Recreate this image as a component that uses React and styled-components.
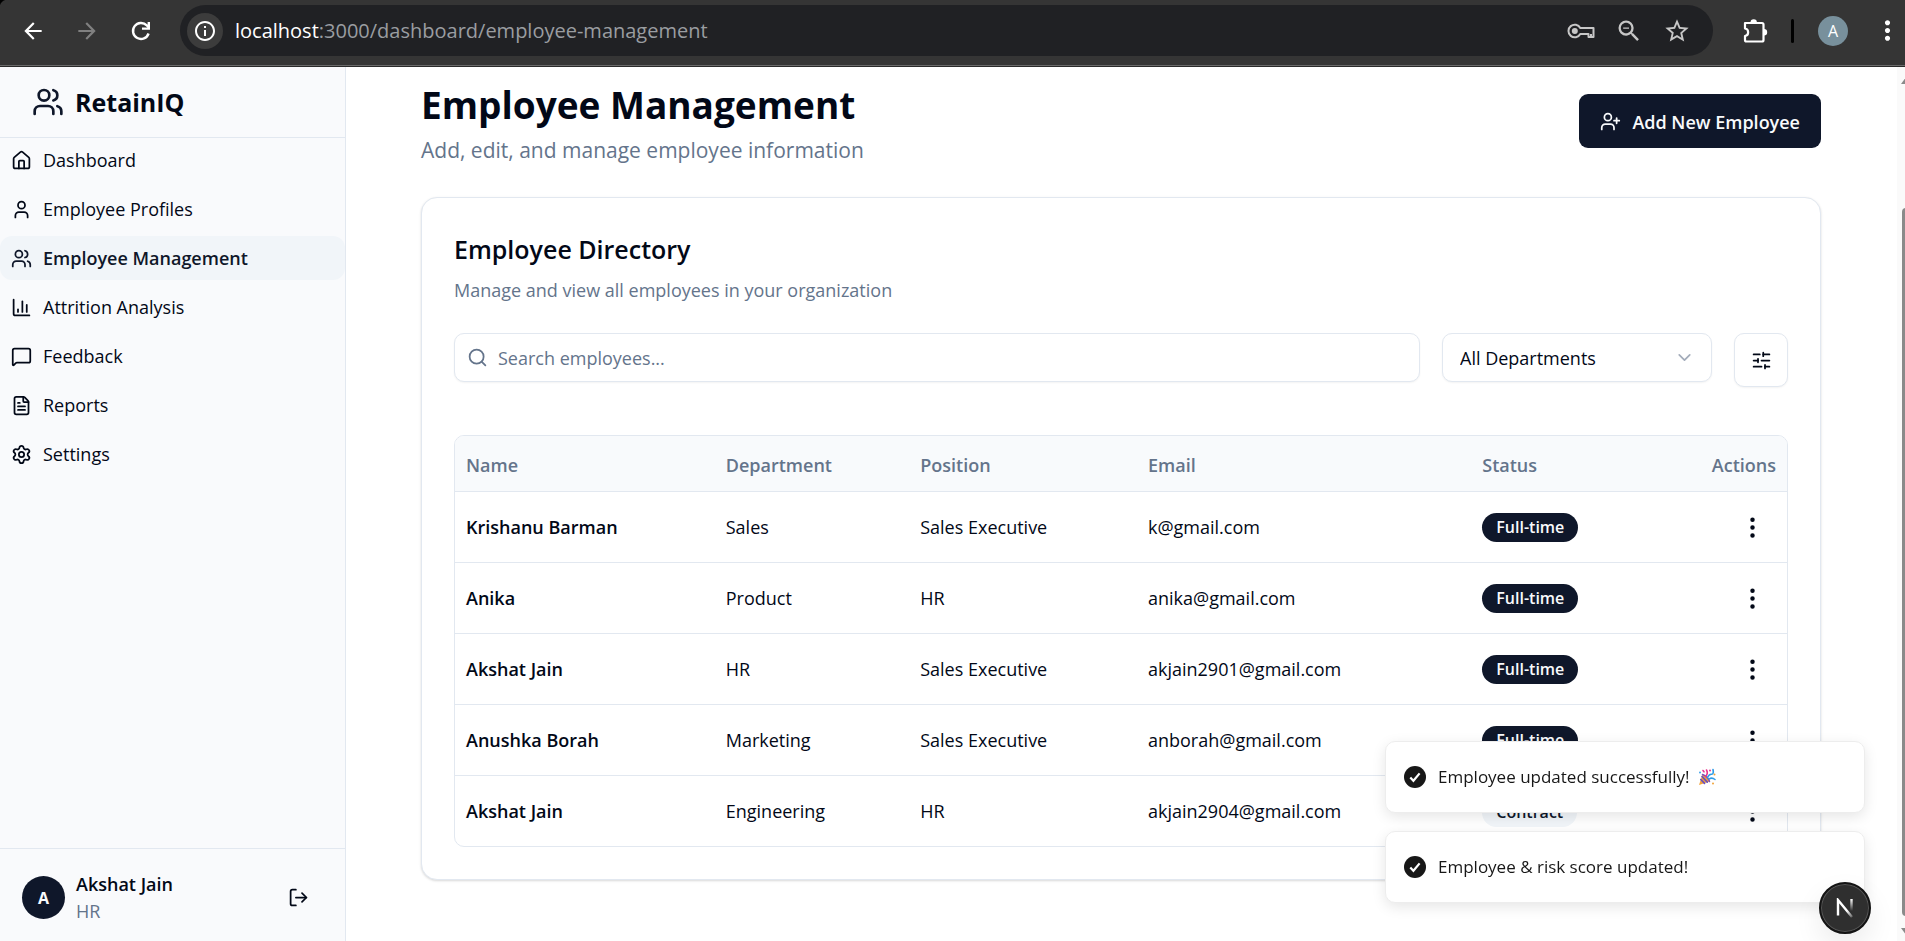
import React, { useState } from "react";
import styled, { createGlobalStyle, css } from "styled-components";
import {
  Users, User, House, ChartColumn, MessageSquare, FileText, Settings, LogOut,
  UserPlus, Search, ChevronDown, SlidersHorizontal, EllipsisVertical,
} from "lucide-react";
import { MdArrowBack, MdArrowForward, MdInfoOutline, MdOutlineZoomOut, MdStarBorder, MdMoreVert } from "react-icons/md";

const Global = createGlobalStyle`
  *, *::before, *::after { box-sizing: border-box; }
  body {
    margin: 0;
    background: #ffffff;
    color: #020817;
    font-family: "Open Sans", "Noto Sans", sans-serif;
    font-size: 18px;
    line-height: 28px;
  }
  button, input, select { font: inherit; color: inherit; }
  h1, h2, p { margin: 0; }
  svg { flex: none; }
`;

const Shell = styled.div`
  min-height: 100vh;
  display: flex;
  flex-direction: column;
`;

/* Browser bar */

const BrowserBar = styled.header`
  display: flex;
  align-items: center;
  height: 67px;
  padding: 0 11px 5px 12px;
  background:
    radial-gradient(circle at 8px 8px, #353535 8px, #000000 9px) 0 0 / 8px 8px no-repeat,
    #353535;
  border-bottom: 1px solid #2a2a2a;
  box-shadow: inset 0 -1px #6a6a6a;
  color: #ffffff;
`;

const BarButton = styled.button`
  display: flex;
  align-items: center;
  justify-content: center;
  flex: none;
  width: ${(p) => p.$width || 42}px;
  height: 42px;
  padding: 0;
  border: 0;
  background: none;
  color: ${(p) => p.$color || "#ffffff"};
`;

const NavButtons = styled.div`
  display: flex;
  gap: 12px;
  margin-right: 18px;
`;

const AddressBar = styled.div`
  display: flex;
  align-items: center;
  flex: 1;
  height: 51px;
  margin-right: 21px;
  padding: 0 12px 0 7px;
  border-radius: 26px;
  background: #202124;
`;

const SiteInfo = styled.button`
  display: flex;
  align-items: center;
  justify-content: center;
  width: 36px;
  height: 36px;
  margin-right: 12px;
  padding: 0;
  border: 0;
  border-radius: 50%;
  background: #3c3c3c;
  color: #ffffff;
`;

const Url = styled.span`
  flex: 1;
  font-size: 20px;
  color: #9a9da1;
`;

const Host = styled.span`
  color: #ffffff;
`;

const Divider = styled.span`
  flex: none;
  width: 3px;
  height: 24px;
  margin: 0 24px 0 15px;
  border-radius: 2px;
  background: #000000;
`;

const ProfileButton = styled.button`
  flex: none;
  width: 30px;
  height: 30px;
  margin-right: 32px;
  padding: 0;
  border: 0;
  border-radius: 50%;
  background: #78909c;
  color: #ffffff;
  font-size: 16px;
`;

/* Sidebar */

const Body = styled.div`
  flex: 1;
  display: flex;
`;

const Sidebar = styled.aside`
  display: flex;
  flex-direction: column;
  flex: none;
  width: 346px;
  border-right: 1px solid #e2e8f0;
  background: #f9fafc;
`;

const Brand = styled.div`
  display: flex;
  align-items: center;
  gap: 11px;
  height: 71px;
  padding-left: 32px;
  border-bottom: 1px solid #e2e8f0;
  color: #0f172a;
`;

const BrandName = styled.span`
  color: #020817;
  font-size: 25px;
  font-weight: 700;
`;

const Nav = styled.nav`
  flex: 1;
  display: flex;
  flex-direction: column;
  gap: 5px;
`;

const NavLink = styled.a`
  display: flex;
  align-items: center;
  gap: 11px;
  height: 44px;
  padding: 0 11px;
  border-radius: 12px;
  color: #020817;
  text-decoration: none;
  ${(p) => p.$active && css`
    background: #f1f5f9;
    color: #0f172a;
    font-weight: 600;
  `}
`;

const Account = styled.div`
  display: flex;
  align-items: center;
  height: 93px;
  padding: 5px 23px 0 22px;
  border-top: 1px solid #e2e8f0;
`;

const Avatar = styled.span`
  display: flex;
  align-items: center;
  justify-content: center;
  width: 43px;
  height: 43px;
  margin-right: 11px;
  border-radius: 50%;
  background: #0f172a;
  color: #f8fafc;
  font-size: 16px;
  font-weight: 700;
`;

const AccountText = styled.div`
  flex: 1;
  line-height: 27px;
`;

const AccountName = styled.div`
  font-weight: 600;
`;

const AccountRole = styled.div`
  color: #64748b;
`;

const IconButton = styled.button`
  display: inline-flex;
  align-items: center;
  justify-content: center;
  width: 48px;
  height: 43px;
  padding: 0;
  border: 0;
  background: none;
`;

/* Main column */

const Main = styled.main`
  flex: 1;
  min-width: 0;
  padding: 15px 25px 60px 24px;
`;

const Container = styled.div`
  max-width: 1400px;
  margin: 0 auto;
`;

const PageHeader = styled.div`
  display: flex;
  align-items: flex-start;
  justify-content: space-between;
  margin-bottom: 32px;
`;

const PageTitle = styled.h1`
  font-size: 37px;
  line-height: 46px;
  font-weight: 700;
`;

const PageSubtitle = styled.p`
  margin-top: 7px;
  font-size: 21px;
  line-height: 30px;
  color: #64748b;
`;

const PrimaryButton = styled.button`
  display: flex;
  align-items: center;
  gap: 11px;
  height: 54px;
  margin-top: 12px;
  padding: 1px 21px 0;
  border: 0;
  border-radius: 9px;
  background: #0f172a;
  color: #f8fafc;
  font-weight: 600;
`;

const Card = styled.section`
  padding: 32px;
  border: 1px solid #e2e8f0;
  border-radius: 16px;
  background: #ffffff;
  box-shadow: 0 1px 3px rgba(0, 0, 0, 0.1), 0 1px 2px rgba(0, 0, 0, 0.06);
`;

const CardTitle = styled.h2`
  font-size: 25px;
  line-height: 38px;
  font-weight: 600;
`;

const CardText = styled.p`
  margin-top: 8px;
  color: #64748b;
`;

const Toolbar = styled.div`
  display: flex;
  align-items: flex-start;
  gap: 22px;
  margin: 29px 0 48px;
`;

const field = css`
  border: 1px solid #e2e8f0;
  border-radius: 10px;
  background: #ffffff;
  box-shadow: 0 1px 2px rgba(0, 0, 0, 0.05);
`;

const SearchField = styled.label`
  ${field}
  display: flex;
  align-items: center;
  flex: 1;
  gap: 10px;
  height: 49px;
  padding: 0 12px;
  color: #64748b;
`;

const SearchInput = styled.input`
  flex: 1;
  padding: 0;
  border: 0;
  outline: 0;
  background: none;
  color: #020817;
  &::placeholder { color: #64748b; opacity: 1; }
`;

const SelectField = styled.div`
  ${field}
  display: grid;
  align-items: center;
  width: 270px;
  height: 49px;
  > * { grid-area: 1 / 1; }
  > svg { justify-self: end; margin-right: 16px; color: #a3acba; pointer-events: none; }
`;

const Select = styled.select`
  width: 100%;
  height: 100%;
  padding: 0 17px;
  border: 0;
  outline: 0;
  background: none;
  appearance: none;
`;

const FilterButton = styled.button`
  ${field}
  display: flex;
  align-items: center;
  justify-content: center;
  width: 54px;
  height: 54px;
  padding: 0;
`;

const TableFrame = styled.div`
  overflow: hidden;
  border: 1px solid #e2e8f0;
  border-radius: 10px;
`;

const Table = styled.table`
  width: 100%;
  border-collapse: collapse;
  table-layout: fixed;
`;

const Th = styled.th`
  width: ${(p) => p.$width};
  height: 55px;
  padding: 3px 11px 0;
  background: #f8fafc;
  border-bottom: 1px solid #e2e8f0;
  color: #64748b;
  font-weight: 600;
  text-align: ${(p) => (p.$end ? "right" : "left")};
`;

const Row = styled.tr`
  &:not(:last-child) { border-bottom: 1px solid #e2e8f0; }
`;

const Td = styled.td`
  height: 71px;
  padding: 1px 11px 0;
  font-weight: ${(p) => (p.$strong ? 600 : 400)};
  text-align: ${(p) => (p.$end ? "right" : "left")};
  vertical-align: middle;
  > button { vertical-align: middle; }
`;

const Badge = styled.span`
  display: inline-block;
  padding: 0 14px;
  border-radius: 15px;
  background: ${(p) => (p.$soft ? "#f1f5f9" : "#0f172a")};
  color: ${(p) => (p.$soft ? "#0f172a" : "#f8fafc")};
  font-size: 16px;
  line-height: 29px;
  font-weight: 600;
  vertical-align: middle;
`;

const ScrollTrack = styled.div`
  display: flex;
  flex-direction: column;
  justify-content: space-between;
  flex: none;
  width: 8px;
  padding: 10px 0 6px 4px;
  overflow: hidden;
  background: #fafafa;
`;

const ScrollArrow = styled.span`
  width: 10px;
  height: 7px;
  background: #8a8a8a;
  clip-path: ${(p) => (p.$down ? "polygon(0 0, 100% 0, 50% 100%)" : "polygon(50% 0, 100% 100%, 0 100%)")};
`;

const ScrollThumb = styled.span`
  flex: 1;
  width: 8px;
  margin: 124px 0 12px 1px;
  border-radius: 5px;
  background: #8a8a8a;
`;

/* Overlays */

const Toasts = styled.div`
  position: fixed;
  right: 40px;
  bottom: 38px;
  display: flex;
  flex-direction: column;
  gap: 18px;
  width: 480px;
`;

const Toast = styled.div`
  display: flex;
  align-items: center;
  gap: 12px;
  height: 72px;
  padding: 0 18px;
  border: 1px solid #ededed;
  border-radius: 10px;
  background: #ffffff;
  box-shadow: 0 4px 14px rgba(0, 0, 0, 0.1);
  color: #171717;
  font-size: 17px;
  font-weight: 500;
`;

const ToastText = styled.span`
  display: flex;
  align-items: center;
  gap: 8px;
`;

const DevBadge = styled.button`
  position: fixed;
  right: 34px;
  bottom: 7px;
  display: flex;
  align-items: center;
  justify-content: center;
  width: 52px;
  height: 52px;
  padding: 0;
  border: 2px solid #141414;
  border-radius: 50%;
  background: #2f2f2f;
  box-shadow: inset 0 0 0 1px #555555, 0 12px 28px rgba(0, 0, 0, 0.08);
`;

/* Drawings */

const ReloadIcon = () => (
  <svg width="26" height="26" viewBox="0 0 26 26" fill="none" stroke="currentColor" strokeWidth="2.4">
    <path d="M20.600 15.500A8 8 0 1 1 18.800 7.400L21 9.600" />
    <path d="M20.800 4V10.600H14" />
  </svg>
);

const KeyIcon = () => (
  <svg width="28" height="18" viewBox="0 0 28 18" fill="none" stroke="currentColor" strokeWidth="2" strokeLinejoin="round">
    <path d="M13.300 6H26.500V15H21.500V12H13.300A6.300 6.300 0 1 1 13.300 6Z" />
    <path d="M24 12V15" />
    <circle cx="7.800" cy="9" r="3" fill="currentColor" stroke="none" />
  </svg>
);

const PuzzleIcon = () => (
  <svg width="26" height="26" viewBox="0 0 26 26" fill="none" stroke="currentColor" strokeWidth="2.200" strokeLinejoin="round">
    <path d="M3 5H20A1.500 1.500 0 0 1 21.500 6.500V22A1.500 1.500 0 0 1 20 23.500H4.500A1.500 1.500 0 0 1 3 22V18C7.200 17.500 7.200 11 3 10.500Z" />
    <path d="M8.500 4.500A3.200 3.200 0 0 1 14.900 4.500ZM22 11A3.200 3.200 0 0 1 22 17.400Z" fill="currentColor" stroke="none" />
  </svg>
);

const CheckIcon = () => (
  <svg width="22" height="22" viewBox="0 0 22 22">
    <circle cx="11" cy="11" r="11" fill="#171717" />
    <path d="M6.300 11.600 9.400 14.800 15.600 7.400" fill="none" stroke="#ffffff" strokeWidth="2.200" />
  </svg>
);

const PartyIcon = () => (
  <svg width="18" height="18" viewBox="0 0 18 18" role="img" aria-label="party popper" fill="none" strokeLinecap="round">
    <path d="M1 17 4.500 6.500Q10 8.500 11.500 13.500Z" fill="#f2a33a" />
    <path d="M2.800 11.500 6.500 15.300M4 8.500 9.300 14.200" stroke="#6a4fc0" strokeWidth="1.700" />
    <path d="M4.500 6.500Q10 8.500 11.500 13.500" stroke="#7a52b8" strokeWidth="1.500" />
    <path d="M7.500 8.500Q10.500 5.500 8.500 2M5 2.500 6 3.800" stroke="#e8368f" strokeWidth="1.600" />
    <path d="M9.500 9.500Q11 6 13.500 6.200T15 1.500" stroke="#2e9be6" strokeWidth="1.600" />
    <path d="M11 11Q14 9 17 11.500" stroke="#2e9be6" strokeWidth="1.500" />
    <circle cx="12" cy="2.500" r="1" fill="#e8368f" />
    <circle cx="16.500" cy="6.500" r="1" fill="#f2a33a" />
    <circle cx="15" cy="15.500" r="1" fill="#f2a33a" />
    <circle cx="2" cy="4.500" r=".9" fill="#2e9be6" />
  </svg>
);

const NextIcon = () => (
  <svg width="18" height="20" viewBox="0 0 18 20" fill="none" strokeWidth="2.400">
    <defs>
      <linearGradient id="diagonal" x1="8" y1="10" x2="16" y2="20" gradientUnits="userSpaceOnUse">
        <stop offset=".3" stopColor="#fff" />
        <stop offset="1" stopColor="#fff" stopOpacity=".2" />
      </linearGradient>
      <linearGradient id="stem" x1="0" y1="1" x2="0" y2="13" gradientUnits="userSpaceOnUse">
        <stop stopColor="#fff" />
        <stop offset="1" stopColor="#fff" stopOpacity="0" />
      </linearGradient>
    </defs>
    <path d="M2 17.500V2L16 19" stroke="url(#diagonal)" />
    <path d="M15.500 1V13" stroke="url(#stem)" />
  </svg>
);

const NAV = [
  ["Dashboard", House],
  ["Employee Profiles", User],
  ["Employee Management", Users],
  ["Attrition Analysis", ChartColumn],
  ["Feedback", MessageSquare],
  ["Reports", FileText],
  ["Settings", Settings],
];

const COLUMNS = [
  ["Name", "19.5%"],
  ["Department", "14.6%"],
  ["Position", "17.1%"],
  ["Email", "25.1%"],
  ["Status", "14%"],
];

const EMPLOYEES = [
  ["Krishanu Barman", "Sales", "Sales Executive", "k@gmail.com", "Full-time"],
  ["Anika", "Product", "HR", "anika@gmail.com", "Full-time"],
  ["Akshat Jain", "HR", "Sales Executive", "akjain2901@gmail.com", "Full-time"],
  ["Anushka Borah", "Marketing", "Sales Executive", "anborah@gmail.com", "Full-time"],
  ["Akshat Jain", "Engineering", "HR", "akjain2904@gmail.com", "Contract"],
];

export default function App() {
  const [query, setQuery] = useState("");
  const [department, setDepartment] = useState("All Departments");
  const rows = EMPLOYEES.filter(
    ([name, dept]) =>
      name.toLowerCase().includes(query.toLowerCase()) &&
      (department === "All Departments" || dept === department)
  );

  return (
    <Shell>
      <Global />
      <BrowserBar>
        <NavButtons>
          <BarButton aria-label="Back"><MdArrowBack size={26} /></BarButton>
          <BarButton aria-label="Forward" $color="#808080"><MdArrowForward size={26} /></BarButton>
          <BarButton aria-label="Reload"><ReloadIcon /></BarButton>
        </NavButtons>
        <AddressBar>
          <SiteInfo aria-label="Site information"><MdInfoOutline size={24} /></SiteInfo>
          <Url><Host>localhost</Host>:3000/dashboard/employee-management</Url>
          <BarButton aria-label="Passwords" $width={48} $color="#c7c7c7"><KeyIcon /></BarButton>
          <BarButton aria-label="Zoom" $width={48} $color="#c7c7c7"><MdOutlineZoomOut size={28} /></BarButton>
          <BarButton aria-label="Bookmark" $width={48} $color="#c7c7c7"><MdStarBorder size={28} /></BarButton>
        </AddressBar>
        <BarButton aria-label="Extensions"><PuzzleIcon /></BarButton>
        <Divider />
        <ProfileButton aria-label="Profile">A</ProfileButton>
        <BarButton aria-label="Menu" $width={14}><MdMoreVert size={31} /></BarButton>
      </BrowserBar>

      <Body>
        <Sidebar>
          <Brand>
            <Users size={32} />
            <BrandName>RetainIQ</BrandName>
          </Brand>
          <Nav>
            {NAV.map(([label, Icon]) => (
              <NavLink key={label} href="#" $active={label === "Employee Management"}>
                <Icon size={21} />
                {label}
              </NavLink>
            ))}
          </Nav>
          <Account>
            <Avatar>A</Avatar>
            <AccountText>
              <AccountName>Akshat Jain</AccountName>
              <AccountRole>HR</AccountRole>
            </AccountText>
            <IconButton aria-label="Log out"><LogOut size={21} /></IconButton>
          </Account>
        </Sidebar>

        <Main>
          <Container>
            <PageHeader>
              <div>
                <PageTitle>Employee Management</PageTitle>
                <PageSubtitle>Add, edit, and manage employee information</PageSubtitle>
              </div>
              <PrimaryButton><UserPlus size={21} />Add New Employee</PrimaryButton>
            </PageHeader>

            <Card>
              <CardTitle>Employee Directory</CardTitle>
              <CardText>Manage and view all employees in your organization</CardText>
              <Toolbar>
                <SearchField>
                  <Search size={21} />
                  <SearchInput
                    aria-label="Search employees"
                    placeholder="Search employees..."
                    value={query}
                    onChange={(e) => setQuery(e.target.value)}
                  />
                </SearchField>
                <SelectField>
                  <Select aria-label="Department" value={department} onChange={(e) => setDepartment(e.target.value)}>
                    {["All Departments", "Sales", "Product", "HR", "Marketing", "Engineering"].map((d) => (
                      <option key={d}>{d}</option>
                    ))}
                  </Select>
                  <ChevronDown size={21} />
                </SelectField>
                <FilterButton aria-label="Filters"><SlidersHorizontal size={21} /></FilterButton>
              </Toolbar>

              <TableFrame>
                <Table>
                  <thead>
                    <tr>
                      {COLUMNS.map(([label, width]) => <Th key={label} $width={width}>{label}</Th>)}
                      <Th $end>Actions</Th>
                    </tr>
                  </thead>
                  <tbody>
                    {rows.map(([name, dept, position, email, status]) => (
                      <Row key={email}>
                        <Td $strong>{name}</Td>
                        <Td>{dept}</Td>
                        <Td>{position}</Td>
                        <Td>{email}</Td>
                        <Td><Badge $soft={status === "Contract"}>{status}</Badge></Td>
                        <Td $end>
                          <IconButton aria-label={`Actions for ${name}`}><EllipsisVertical size={27} /></IconButton>
                        </Td>
                      </Row>
                    ))}
                  </tbody>
                </Table>
              </TableFrame>
            </Card>
          </Container>
        </Main>

        <ScrollTrack aria-hidden="true">
          <ScrollArrow />
          <ScrollThumb />
          <ScrollArrow $down />
        </ScrollTrack>
      </Body>

      <Toasts role="status">
        <Toast><CheckIcon /><ToastText>Employee updated successfully! <PartyIcon /></ToastText></Toast>
        <Toast><CheckIcon /><ToastText>Employee &amp; risk score updated!</ToastText></Toast>
      </Toasts>
      <DevBadge aria-label="Open developer tools"><NextIcon /></DevBadge>
    </Shell>
  );
}
